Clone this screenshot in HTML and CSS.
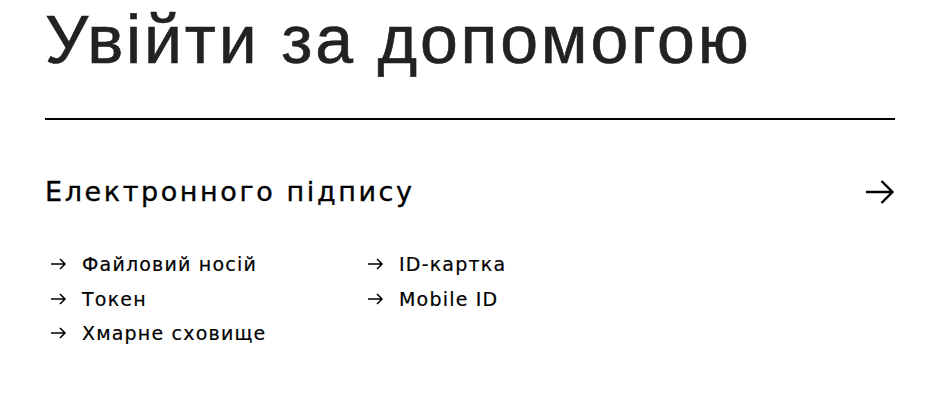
FILE: index.html
```html
<!DOCTYPE html>
<html lang="uk">
<head>
<meta charset="utf-8">
<link rel="stylesheet" href="styles.css">
</head>
<body>
<main class="page">
  <h1 class="title">Увійти за допомогою</h1>
  <hr class="rule">
  <section class="method">
    <div class="method-head">
      <h2 class="method-title">Електронного підпису</h2>
      <svg class="big-arrow" width="30" height="26" viewBox="0 0 30 26"><path d="M1 13H27.5M16.5 2L27.5 13L16.5 24" fill="none" stroke="#000" stroke-width="2.4"/></svg>
    </div>
    <ul class="options">
      <li><svg class="arr" width="17" height="12" viewBox="0 0 17 12"><path d="M1 6H15M10 1L15 6L10 11" fill="none" stroke="#000" stroke-width="1.5"/></svg>Файловий носій</li>
      <li><svg class="arr" width="17" height="12" viewBox="0 0 17 12"><path d="M1 6H15M10 1L15 6L10 11" fill="none" stroke="#000" stroke-width="1.5"/></svg>ID-картка</li>
      <li><svg class="arr" width="17" height="12" viewBox="0 0 17 12"><path d="M1 6H15M10 1L15 6L10 11" fill="none" stroke="#000" stroke-width="1.5"/></svg>Токен</li>
      <li><svg class="arr" width="17" height="12" viewBox="0 0 17 12"><path d="M1 6H15M10 1L15 6L10 11" fill="none" stroke="#000" stroke-width="1.5"/></svg>Mobile ID</li>
      <li><svg class="arr" width="17" height="12" viewBox="0 0 17 12"><path d="M1 6H15M10 1L15 6L10 11" fill="none" stroke="#000" stroke-width="1.5"/></svg>Хмарне сховище</li>
    </ul>
  </section>
</main>
</body>
</html>
```
FILE: styles.css
```css
html, body { margin: 0; padding: 0; background: #fff; }
.page { padding: 0 35px 0 45px; }
.title {
  margin: 0;
  padding-top: 1px;
  font-family: "Liberation Sans", Arial, sans-serif;
  font-weight: 400;
  font-size: 68px;
  line-height: 76px;
  letter-spacing: 2.8px;
  color: #222;
  -webkit-text-stroke: 0.6px #222;
}
.rule { margin: 41px 0 0; border: 0; height: 2px; background: #000; }
.method { padding-top: 54px; }
.method-head { display: flex; justify-content: space-between; align-items: center; }
.method-title {
  margin: 0;
  font-family: "DejaVu Sans", sans-serif;
  font-weight: 400;
  font-size: 27px;
  line-height: 36px;
  letter-spacing: 2.6px;
  color: #000;
  -webkit-text-stroke: 0.35px #000;
}
.big-arrow { margin-right: 0; }
.options {
  list-style: none;
  margin: 37px 0 0;
  padding: 0 0 0 5px;
  display: grid;
  grid-template-columns: 317px 1fr;
  font-family: "DejaVu Sans", sans-serif;
  font-size: 19px;
  line-height: 34.5px;
  letter-spacing: 1.2px;
  color: #000;
  -webkit-text-stroke: 0.2px #000;
}
.options li { display: flex; align-items: center; }
.arr { margin-right: 15px; flex: none; }
```
